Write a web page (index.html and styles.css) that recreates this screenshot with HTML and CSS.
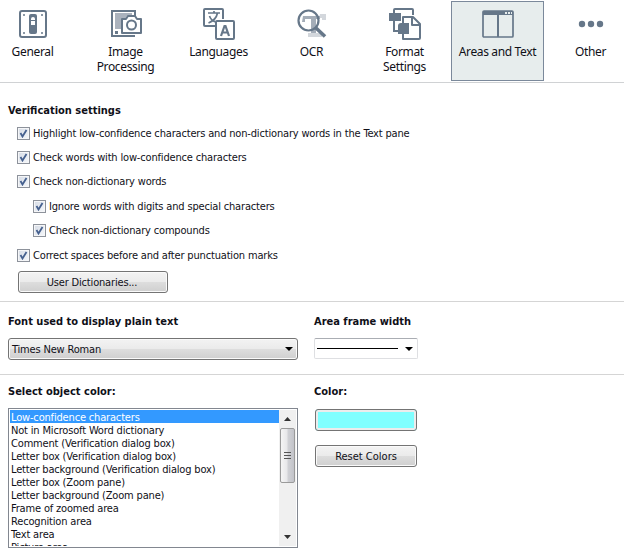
FILE: index.html
```html
<!DOCTYPE html>
<html lang="en">
<head>
<meta charset="utf-8">
<title>Options</title>
<link rel="stylesheet" href="styles.css">
</head>
<body>
<nav class="toolbar">
  <div class="tab">
    <svg class="icon" viewBox="0 0 32 32"><rect x="3" y="3" width="26" height="26" rx="2" fill="#fff" stroke="#667789" stroke-width="2"/><g fill="#667789"><circle cx="7" cy="7" r="1"/><circle cx="25" cy="7" r="1"/><circle cx="7" cy="25" r="1"/><circle cx="25" cy="25" r="1"/><rect x="12" y="6" width="8" height="20" rx="2"/></g><path d="M14 11q0-2 2-2t2 2v1h-4zM14 13h4v4h-4z" fill="#fff"/></svg>
    <span>General</span>
  </div>
  <div class="tab">
    <svg class="icon" viewBox="0 0 32 32"><path d="M25 8V3H2v25h23" fill="#fff" stroke="#667789" stroke-width="2"/><path d="M5 5h17v3h-5l-2 3h-3v10H5z" fill="#aab2bd"/><path d="M5 23h3v3H5z" fill="#667789"/><path d="M12 11h4l2-3h7l2 3h4v14H12z" fill="#fff" stroke="#667789" stroke-width="2" stroke-linejoin="round"/><circle cx="21.500" cy="17" r="4.500" fill="#fff" stroke="#667789" stroke-width="2"/></svg>
    <span>Image<br>Processing</span>
  </div>
  <div class="tab">
    <svg class="icon" viewBox="0 0 32 32"><g fill="none" stroke="#667789" stroke-width="2"><path d="M20 11V2a1 1 0 0 0-1-1H2a1 1 0 0 0-1 1v15a1 1 0 0 0 1 1h10"/><rect x="13" y="13" width="18" height="18" rx="1"/><path d="M5 5h12M11 3v2M14.500 5c-1 5-4 8-9 10M6.500 8c1 3 3 5 6 6" stroke-width="1.700"/><path d="M18 28l3.500-10h1L26 28M19.500 24.500h5" stroke-width="2.200"/></g></svg>
    <span>Languages</span>
  </div>
  <div class="tab">
    <svg class="icon" viewBox="0 0 32 32"><path d="M24 6h6v6h-4v-2h-3zM12 25h14v4H12z" fill="#d3d7dc"/><path d="M7 8h17v3h-4v14h-5V11H9v3H6z" fill="#a4adb8"/><circle cx="12.500" cy="12.500" r="10" fill="none" stroke="#667789" stroke-width="2.200"/><path d="M19.500 19.500l9.500 9" stroke="#667789" stroke-width="3.600"/></svg>
    <span>OCR</span>
  </div>
  <div class="tab">
    <svg class="icon" viewBox="0 0 32 32"><path d="M5 5V2a1 1 0 0 1 1-1h17a1 1 0 0 1 1 1v5M5 12v11h5" fill="none" stroke="#667789" stroke-width="2"/><path d="M14 15V9h10l7 7v14a1 1 0 0 1-1 1H14v-5M23 9v8h8" fill="#fff" stroke="#667789" stroke-width="2" stroke-linejoin="round"/><path d="M0 5h12v8H0zM9 18q0-3 3-3h8v11H9z" fill="#667789"/></svg>
    <span>Format<br>Settings</span>
  </div>
  <div class="tab active">
    <svg class="icon" viewBox="0 0 32 32"><rect x="1" y="3" width="30" height="26" rx="1" fill="none" stroke="#667789" stroke-width="1.700"/><path d="M1 3h30v4H1zM15 7h2v22h-2z" fill="#667789"/><path d="M23 4h2v2h-2zM26 4h2v2h-2zM29 4h1v2h-1z" fill="#e7eded"/></svg>
    <span>Areas and Text</span>
  </div>
  <div class="tab">
    <svg class="icon" viewBox="0 0 32 32"><g fill="#667789"><circle cx="7" cy="16" r="3.200"/><circle cx="16" cy="16" r="3.200"/><circle cx="25" cy="16" r="3.200"/></g></svg>
    <span>Other</span>
  </div>
</nav>

<section class="verification">
  <h2>Verification settings</h2>
  <div class="check"><i class="box"><svg viewBox="0 0 9 9"><path d="M1.500 4l2 3.500L7.500 1"/></svg></i><span>Highlight low-confidence characters and non-dictionary words in the Text pane</span></div>
  <div class="check"><i class="box"><svg viewBox="0 0 9 9"><path d="M1.500 4l2 3.500L7.500 1"/></svg></i><span>Check words with low-confidence characters</span></div>
  <div class="check"><i class="box"><svg viewBox="0 0 9 9"><path d="M1.500 4l2 3.500L7.500 1"/></svg></i><span>Check non-dictionary words</span></div>
  <div class="check sub"><i class="box"><svg viewBox="0 0 9 9"><path d="M1.500 4l2 3.500L7.500 1"/></svg></i><span>Ignore words with digits and special characters</span></div>
  <div class="check sub"><i class="box"><svg viewBox="0 0 9 9"><path d="M1.500 4l2 3.500L7.500 1"/></svg></i><span>Check non-dictionary compounds</span></div>
  <div class="check"><i class="box"><svg viewBox="0 0 9 9"><path d="M1.500 4l2 3.500L7.500 1"/></svg></i><span>Correct spaces before and after punctuation marks</span></div>
  <div class="button dictionaries">User Dictionaries...</div>
</section>

<section class="columns fonts">
  <div>
    <h2>Font used to display plain text</h2>
    <div class="button select"><span>Times New Roman</span><svg class="arrow" viewBox="0 0 8 4"><path d="M0 0h8L4 4z"/></svg></div>
  </div>
  <div>
    <h2 class="frame-title">Area frame width</h2>
    <div class="frame-select"><i class="line"></i><svg class="arrow" viewBox="0 0 8 4"><path d="M0 0h8L4 4z"/></svg></div>
  </div>
</section>

<section class="columns colors">
  <div>
    <h2>Select object color:</h2>
    <div class="list">
      <ul>
        <li class="selected">Low-confidence characters</li>
        <li>Not in Microsoft Word dictionary</li>
        <li>Comment (Verification dialog box)</li>
        <li>Letter box (Verification dialog box)</li>
        <li>Letter background (Verification dialog box)</li>
        <li>Letter box (Zoom pane)</li>
        <li>Letter background (Zoom pane)</li>
        <li>Frame of zoomed area</li>
        <li>Recognition area</li>
        <li>Text area</li>
        <li>Picture area</li>
      </ul>
      <div class="scrollbar">
        <svg class="up" viewBox="0 0 7 4"><path d="M0 4h7L3.500 0z"/></svg>
        <div class="thumb"><i></i><i></i><i></i></div>
        <svg class="down" viewBox="0 0 7 4"><path d="M0 0h7L3.500 4z"/></svg>
      </div>
    </div>
  </div>
  <div class="color-column">
    <h2 class="color-title">Color:</h2>
    <div class="button swatch"></div>
    <div class="button reset">Reset Colors</div>
  </div>
</section>
</body>
</html>
```

FILE: styles.css
```css
* { box-sizing: border-box; }
body {
  margin: 0;
  width: 624px;
  height: 557px;
  overflow: hidden;
  background: #fff;
  color: #101018;
  font: 11px/13px "DejaVu Sans Condensed", "DejaVu Sans", sans-serif;
  font-stretch: condensed;
  letter-spacing: -0.17px;
}
svg { display: block; }
.toolbar {
  display: flex;
  height: 83px;
  padding-top: 1px;
  margin-left: -14px;
  border-bottom: 1px solid #d0d2d4;
}
.tab {
  flex: 0 0 93px;
  height: 80px;
  padding-top: 7px;
  display: flex;
  flex-direction: column;
  align-items: center;
  gap: 4px;
  text-align: center;
  font: 12px/15px "Noto Sans", sans-serif;
  letter-spacing: -0.35px;
}
.tab.active {
  background: #e7eded;
  outline: 1px solid #7b899b;
  outline-offset: -1px;
}
.icon { width: 32px; height: 32px; }

section { padding-left: 8px; }
h2 {
  margin: 0;
  font-size: 11px;
  line-height: 14px;
  font-weight: bold;
  letter-spacing: 0;
  white-space: nowrap;
}
.verification { height: 219px; padding-top: 21px; border-bottom: 1px solid #d5d5d5; }
.verification h2 { margin-bottom: 3px; }
.check {
  display: flex;
  align-items: center;
  height: 24.4px;
  padding-left: 9px;
  gap: 3px;
  white-space: nowrap;
}
.check.sub { padding-left: 25px; }
.box {
  width: 13px;
  height: 13px;
  padding: 1px;
  border: 1px solid #8d929b;
  background: linear-gradient(135deg, #d5dbe5, #f6f8fb);
  box-shadow: inset 0 0 0 1px #f5f6f8;
}
.box path { fill: none; stroke: #46618f; stroke-width: 1.800; }
.button {
  height: 22px;
  border: 1px solid #747474;
  border-radius: 3px;
  background: linear-gradient(#f3f3f3, #ebebeb 48%, #dddddd 52%, #cfcfcf);
  box-shadow: inset 0 0 0 1px #fafafa;
  line-height: 21px;
  text-align: center;
}
.dictionaries { width: 150px; margin: 4px 0 0 10px; padding-right: 2px; }
.columns { display: grid; grid-template-columns: 306px 1fr; }
.fonts { height: 73px; padding-top: 13px; border-bottom: 1px solid #d5d5d5; }
.fonts h2 { margin-bottom: 9px; }
.select {
  width: 290px;
  display: flex;
  align-items: center;
  justify-content: space-between;
  padding: 0 4px 0 3px;
}
.select span { padding-top: 1px; }
.arrow { width: 8px; height: 4px; }
.frame-select {
  width: 104px;
  height: 21px;
  border: 1px solid #dedfe2;
  border-top-color: #aaadb3;
  border-radius: 2px;
  display: flex;
  align-items: center;
  justify-content: space-between;
  padding: 0 4px 0 2px;
}
.line { width: 81px; height: 1px; background: #000; }
.colors { padding-top: 10px; }
.colors h2 { margin-bottom: 9px; }
.list {
  width: 290px;
  height: 140px;
  border: 1px solid #828790;
  padding: 1px;
  display: flex;
  overflow: hidden;
}
ul { flex: 1; height: 136px; margin: 0; padding: 0; list-style: none; overflow: hidden; }
li { height: 13px; padding-left: 1px; line-height: 15px; white-space: nowrap; }
.selected { background: #3399ff; color: #fff; }
.scrollbar {
  width: 17px;
  background: #f0f0f0;
  display: flex;
  flex-direction: column;
  align-items: center;
}
.up, .down { width: 7px; height: 4px; fill: #333; }
.up { margin: 7px 0; }
.down { margin: auto 0 7px; }
.thumb {
  width: 15px;
  height: 55px;
  border: 1px solid #9a9a9a;
  border-radius: 2px;
  background: linear-gradient(90deg, #f5f5f5, #e7e7e9 48%, #d1d2d6 52%, #c2c3c9);
  display: flex;
  flex-direction: column;
  align-items: center;
  justify-content: center;
  gap: 2px;
}
.thumb i { width: 7px; height: 1px; background: #555; }
.color-column { padding-left: 1px; }
.color-title { margin-left: -1px; }
.swatch {
  width: 102px;
  margin-top: 10px;
  background: #80ffff;
  box-shadow: inset 0 0 0 2px #ececec;
}
.reset { width: 102px; margin-top: 14px; letter-spacing: 0; }
```
